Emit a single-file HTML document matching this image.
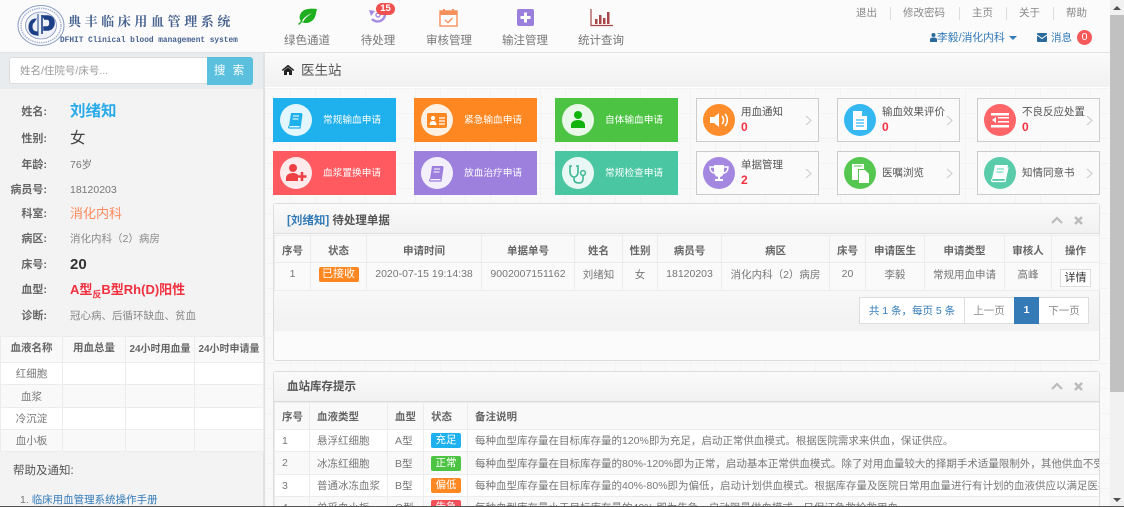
<!DOCTYPE html>
<html lang="zh-CN"><head><meta charset="utf-8"><title>典丰临床用血管理系统</title>
<style>
*{box-sizing:border-box}
html,body{margin:0;padding:0;width:1124px;height:507px;overflow:hidden;background:#f8f8f8}
body{position:relative;font-family:"Liberation Sans","Noto Sans CJK SC",sans-serif;font-size:10.5px;color:#777;filter:blur(.3px)}
.a{position:absolute}
.t{position:absolute;white-space:nowrap;line-height:14px}
.c{transform:translateX(-50%)}
.lb{position:absolute;width:47px;left:0;text-align:right;white-space:nowrap;line-height:14px;font-size:11px;font-weight:bold;color:#666}
.v{position:absolute;left:70px;white-space:nowrap;line-height:18px}
.tile{position:absolute;width:123px;height:44px;color:#fff}
.tile .k{position:absolute;left:7px;top:6px;width:32px;height:32px;border-radius:50%;background:rgba(255,255,255,.88)}
.tile .k svg,.out .k svg{position:absolute;left:0;top:0;width:32px;height:32px}
.tile span{position:absolute;left:50px;top:16px;font-size:9.7px;line-height:14px;white-space:nowrap}
.out{position:absolute;width:123px;height:44px;background:#fafafa;border:1px solid #ccc;color:#555}
.out .k{position:absolute;left:6px;top:5px;width:32px;height:32px;border-radius:50%}
.out b{position:absolute;left:44px;top:21px;color:#f5303f;font-size:12px;line-height:14px}
.out span{position:absolute;left:44px;top:6px;font-size:10.5px;line-height:14px;white-space:nowrap}
.out span.m{top:14px}
.out svg.ch{position:absolute;right:6px;top:16px;width:7px;height:11px}
table{position:absolute;border-collapse:collapse;table-layout:fixed;background:#fff}
td,th{border:1px solid #ececec;padding:0;text-align:center;font-size:10.5px;white-space:nowrap;overflow:hidden;font-weight:normal}
th{font-weight:bold;color:#666;background:#f9f9f9}
.panel{position:absolute;left:273px;width:827px;border:1px solid #ddd;border-radius:3px;background:#fbfbfb}
.ph{position:absolute;left:0;top:0;width:825px;height:30px;background:linear-gradient(#fafafa,#f1f1f1);border-bottom:1px solid #ddd}
.left td,.left th{text-align:left;padding-left:7px}
.lab{display:inline-block;width:30px;height:15px;line-height:15px;text-align:center;color:#fff;border-radius:2px;font-size:10.5px}
.p1 td{padding-bottom:5px}
.p1 th{padding-top:2px}
.lt th{padding-bottom:4px}
</style></head><body>

<!-- page background grid -->
<div class="a" style="left:265px;top:88px;width:845px;height:419px;background-color:#f9f9f9;background-image:linear-gradient(#f3f3f3 1px,transparent 1px),linear-gradient(90deg,#f3f3f3 1px,transparent 1px);background-size:25px 25px"></div>

<!-- header -->
<div class="a" style="left:0;top:0;width:1110px;height:53px;background:#fbfbfb;border-bottom:1px solid #e3e3e3"></div>
<svg class="a" style="left:17px;top:5px" width="48" height="41" viewBox="0 0 48 41">
<ellipse cx="24" cy="20.5" rx="23" ry="20" fill="#fff" stroke="#8b9cc0" stroke-width="1"/>
<ellipse cx="24" cy="20.5" rx="20" ry="17.2" fill="none" stroke="#a9b6d2" stroke-width="1.6" stroke-dasharray="1.5 .8"/>
<ellipse cx="24" cy="20.5" rx="15.5" ry="13.5" fill="#eef1f7" stroke="#7f92b9" stroke-width=".8"/>
<path d="M21 9v22M12 22c0-6 4-8 7-8l-2 3c-2 1-2 3-2 5 0 3 2 5 6 5v3c-6 0-9-3-9-8z" fill="#1c3f86" stroke="#1c3f86"/>
<path d="M25 10v19M25 11h5c5 0 7 3 7 7s-3 7-7 7h-3v-3h3c2 0 3-2 3-4s-1-4-3-4h-3" fill="#1c3f86" stroke="#1c3f86" stroke-width="1.6"/>
</svg>
<div class="t" style="left:68px;top:14px;font-family:'Noto Serif CJK SC','Liberation Serif',serif;font-weight:bold;font-size:13px;letter-spacing:3.6px;color:#46618f">典丰临床用血管理系统</div>
<div class="t" style="left:60px;top:34px;font-family:'Liberation Mono',monospace;font-weight:bold;font-size:7.8px;color:#46618f">DFHIT Clinical blood management system</div>

<!-- nav -->
<svg class="a" style="left:297px;top:8px" width="21" height="18" viewBox="0 0 21 18"><path d="M20 1C12 0 5 1 3 7c-1 3 0 5 1 6l-3 3 1 1 3-3c3 2 8 1 11-2 3-3 3-8 4-11zM5 13c2-4 6-6 10-8-4 3-7 5-9 9z" fill="#1fae1f"/></svg>
<svg class="a" style="left:369px;top:8px" width="20" height="19" viewBox="0 0 20 19"><path d="M0 2l6 1-4 5z" fill="#a48ae0"/><path d="M3 11a7.500 7.500 0 0 0 13-6" fill="none" stroke="#a48ae0" stroke-width="2.400"/><circle cx="9" cy="7" r="2" fill="none" stroke="#a48ae0" stroke-width="1.400"/></svg>
<div class="a" style="left:376px;top:3px;width:19px;height:12px;border-radius:6px;background:#f05050;color:#fff;font-size:9.5px;font-weight:bold;line-height:12px;text-align:center">15</div>
<svg class="a" style="left:439px;top:8px" width="19" height="19" viewBox="0 0 19 19"><rect x="1" y="3" width="17" height="15" fill="#fff" stroke="#f5905a" stroke-width="1.4"/><path d="M1 3h17v4H1z" fill="#f5905a"/><path d="M5 1v4M14 1v4" stroke="#f5905a" stroke-width="2"/><path d="M6 12l3 2.500 4.500-4.500" fill="none" stroke="#f5905a" stroke-width="1.4"/></svg>
<svg class="a" style="left:517px;top:9px" width="17" height="17" viewBox="0 0 17 17"><rect width="17" height="17" rx="2" fill="#9b7fdc"/><path d="M8.500 3.500v10M3.500 8.500h10" stroke="#fff" stroke-width="3"/></svg>
<svg class="a" style="left:590px;top:9px" width="23" height="18" viewBox="0 0 23 18"><path d="M1 0v16.500h22" fill="none" stroke="#a8474a" stroke-width="1.2"/><path d="M5 10h2.500v5H5zM9 6h2.500v9H9zM13 9h2.500v6H13zM17 3h2.500v12H17z" fill="#a8474a"/></svg>
<div class="t c" style="left:307px;top:34px;font-size:11.5px;color:#777">绿色通道</div>
<div class="t c" style="left:378px;top:34px;font-size:11.5px;color:#777">待处理</div>
<div class="t c" style="left:449px;top:34px;font-size:11.5px;color:#777">审核管理</div>
<div class="t c" style="left:525px;top:34px;font-size:11.5px;color:#777">输注管理</div>
<div class="t c" style="left:601px;top:34px;font-size:11.5px;color:#777">统计查询</div>

<!-- top right -->
<div class="t" style="left:856px;top:6px;color:#888">退出</div>
<div class="t" style="left:903px;top:6px;color:#888">修改密码</div>
<div class="t" style="left:972px;top:6px;color:#888">主页</div>
<div class="t" style="left:1019px;top:6px;color:#888">关于</div>
<div class="t" style="left:1066px;top:6px;color:#888">帮助</div>
<div class="a" style="left:890px;top:7px;width:1px;height:13px;background:#ddd"></div>
<div class="a" style="left:959px;top:7px;width:1px;height:13px;background:#ddd"></div>
<div class="a" style="left:1006px;top:7px;width:1px;height:13px;background:#ddd"></div>
<div class="a" style="left:1053px;top:7px;width:1px;height:13px;background:#ddd"></div>
<svg class="a" style="left:930px;top:33px" width="7" height="9" viewBox="0 0 7 9"><circle cx="3.500" cy="2" r="2" fill="#2a6a9c"/><path d="M0 9V6.500C0 5 1.500 4.500 3.500 4.500S7 5 7 6.500V9z" fill="#2a6a9c"/></svg>
<div class="t" style="left:937px;top:31px;font-size:10.8px;color:#337ab7">李毅/消化内科</div>
<div class="a" style="left:1009px;top:36px;border:4px solid transparent;border-top:4px solid #337ab7;border-bottom:0"></div>
<svg class="a" style="left:1037px;top:33px" width="10" height="9" viewBox="0 0 10 9"><rect width="10" height="9" rx="1" fill="#2a6a9c"/><path d="M0 2l5 3.500L10 2" fill="none" stroke="#fff" stroke-width="1"/></svg>
<div class="t" style="left:1051px;top:31px;color:#337ab7">消息</div>
<div class="a" style="left:1077px;top:30px;width:15px;height:15px;border-radius:50%;background:#f55a5a;color:#fff;text-align:center;line-height:15px;font-size:10.5px">0</div>

<!-- sidebar -->
<div class="a" style="left:0;top:53px;width:265px;height:454px;background:#f3f3f3;border-right:2px solid #e2e2e2"></div>
<div class="a" style="left:0;top:53px;width:263px;height:36px;background:#e8ecef"></div>
<div class="a" style="left:9px;top:57px;width:199px;height:27px;background:#fff;border:1px solid #ddd;border-radius:3px 0 0 3px"></div>
<div class="t" style="left:20px;top:64px;font-size:10.5px;color:#999">姓名/住院号/床号...</div>
<div class="a" style="left:207px;top:57px;width:46px;height:28px;background:#5bc0de;border-radius:0 3px 3px 0;color:#fff;font-size:11.5px;line-height:28px;text-align:center;letter-spacing:2px">搜 索</div>

<div class="lb" style="top:105px">姓名:</div><div class="v" style="top:103px;font-size:15.5px;font-weight:bold;color:#29abe9">刘绪知</div>
<div class="lb" style="top:132px">性别:</div><div class="v" style="top:130px;font-size:15.5px;color:#444">女</div>
<div class="lb" style="top:158px">年龄:</div><div class="v" style="top:156px;font-size:10.5px;color:#777">76岁</div>
<div class="lb" style="top:183px">病员号:</div><div class="v" style="top:181px;font-size:10.5px;color:#777">18120203</div>
<div class="lb" style="top:207px">科室:</div><div class="v" style="top:205px;font-size:13px;color:#ff8a5c">消化内科</div>
<div class="lb" style="top:232px">病区:</div><div class="v" style="top:230px;font-size:10.5px;color:#888">消化内科（2）病房</div>
<div class="lb" style="top:258px">床号:</div><div class="v" style="top:256px;font-size:15px;font-weight:bold;color:#333">20</div>
<div class="lb" style="top:283px">血型:</div><div class="v" style="top:281px;font-size:13px;font-weight:bold;color:#f0303f">A型<sub style="font-size:9px;line-height:0">反</sub>B型Rh(D)阳性</div>
<div class="lb" style="top:309px">诊断:</div><div class="v" style="top:307px;font-size:10.5px;color:#888">冠心病、后循环缺血、贫血</div>

<table class="lt" style="left:0;top:336px;width:263px">
<colgroup><col style="width:62px"><col style="width:63px"><col style="width:69px"><col style="width:69px"></colgroup>
<tr style="height:26px"><th>血液名称</th><th>用血总量</th><th style="font-size:10px">24小时用血量</th><th style="font-size:10px">24小时申请量</th></tr>
<tr style="height:22px"><td>红细胞</td><td></td><td></td><td></td></tr>
<tr style="height:23px;background:#f9f9f9"><td>血浆</td><td></td><td></td><td></td></tr>
<tr style="height:22px"><td>冷沉淀</td><td></td><td></td><td></td></tr>
<tr style="height:22px;background:#f9f9f9"><td>血小板</td><td></td><td></td><td></td></tr>
</table>
<div class="t" style="left:13px;top:464px;font-size:11.5px;color:#555">帮助及通知:</div>
<div class="t" style="left:20px;top:493px;font-size:10.5px;color:#777">1. <span style="color:#337ab7">临床用血管理系统操作手册</span></div>

<!-- breadcrumb -->
<div class="a" style="left:265px;top:53px;width:845px;height:35px;background:linear-gradient(#fafafa,#f1f1f1);border-bottom:1px solid #fff"></div>
<svg class="a" style="left:282px;top:65px" width="12" height="10" viewBox="0 0 12 10"><path d="M6 0L0 5l.7.800L6 1.500l5.300 4.300.7-.800z" fill="#222" stroke="#222" stroke-width=".5"/><path d="M2 5.500L6 2.300l4 3.200V10H7V7H5v3H2z" fill="#222"/></svg>
<div class="t" style="left:301px;top:64px;font-size:13.5px;color:#555">医生站</div>

<!-- coloured tiles -->
<div class="tile" style="left:273px;top:98px;background:#1fb1ee"><div class="k"><svg viewBox="0 0 32 32"><path d="M11 9h11l-2 13H9z" fill="#1fb1ee"/><path d="M9 22c-1 2 0 2 1 2h10l2-14" fill="none" stroke="#1fb1ee" stroke-width="1.200"/><path d="M13 12h6M12.500 15h6" stroke="#fff"/></svg></div><span>常规输血申请</span></div>
<div class="tile" style="left:414px;top:98px;background:#ff8721"><div class="k"><svg viewBox="0 0 32 32"><rect x="6" y="9" width="20" height="15" rx="2" fill="#ff8721"/><circle cx="12" cy="14" r="2" fill="#fff"/><path d="M8.500 21c0-3 1.500-4 3.500-4s3.500 1 3.500 4z" fill="#fff"/><path d="M18 14h6M18 17h6M18 20h6" stroke="#fff" stroke-width="1.200"/></svg></div><span>紧急输血申请</span></div>
<div class="tile" style="left:555px;top:98px;background:#4cc343"><div class="k"><svg viewBox="0 0 32 32"><circle cx="16" cy="11" r="4" fill="#11b30f"/><path d="M9 24v-3c0-3 3-5 7-5s7 2 7 5v3z" fill="#11b30f"/></svg></div><span>自体输血申请</span></div>
<div class="tile" style="left:273px;top:151px;background:#ff5a5f"><div class="k"><svg viewBox="0 0 32 32"><circle cx="13" cy="11" r="4" fill="#ee3f44"/><path d="M6 24v-3c0-3 3-5 7-5 2 0 4 .500 5 2v6z" fill="#ee3f44"/><path d="M22 15v9M17.500 19.500h9" stroke="#ee3f44" stroke-width="2.600"/></svg></div><span>血浆置换申请</span></div>
<div class="tile" style="left:414px;top:151px;background:#9d7fdd"><div class="k"><svg viewBox="0 0 32 32"><path d="M11 9h11l-2 13H9z" fill="#9d7fdd"/><path d="M9 22c-1 2 0 2 1 2h10l2-14" fill="none" stroke="#9d7fdd" stroke-width="1.200"/><path d="M13 12h6M12.500 15h6" stroke="#fff"/></svg></div><span>放血治疗申请</span></div>
<div class="tile" style="left:555px;top:151px;background:#4bc6a2"><div class="k"><svg viewBox="0 0 32 32"><path d="M10 9H8v6c0 3 2 5 4 5s4-2 4-5V9h-2M12 20v2c0 3 2 4 5 4s4-2 4-4v-3" fill="none" stroke="#3fb893" stroke-width="1.600"/><circle cx="21" cy="16" r="2.400" fill="none" stroke="#3fb893" stroke-width="1.500"/></svg></div><span>常规检查申请</span></div>

<!-- outline tiles -->
<div class="out" style="left:696px;top:98px"><div class="k" style="background:#ff8d2b"><svg viewBox="0 0 32 32"><path d="M7 13h4l5-4v14l-5-4H7z" fill="#fff"/><path d="M19 12c2 2 2 6 0 8M22 10c3 3 3 9 0 12" fill="none" stroke="#fff" stroke-width="1.500"/></svg></div><span>用血通知</span><b>0</b><svg class="ch" viewBox="0 0 7 11"><path d="M1 1l5 4.500L1 10" fill="none" stroke="#ccc" stroke-width="1.100"/></svg></div>
<div class="out" style="left:837px;top:98px"><div class="k" style="background:#35b7f2"><svg viewBox="0 0 32 32"><path d="M9 7h9l5 5v14H9z" fill="#fff"/><path d="M18 7v5h5" fill="#35b7f2"/><path d="M12 16h8M12 19h8M12 22h8" stroke="#35b7f2" stroke-width="1.200"/></svg></div><span>输血效果评价</span><b>0</b><svg class="ch" viewBox="0 0 7 11"><path d="M1 1l5 4.500L1 10" fill="none" stroke="#ccc" stroke-width="1.100"/></svg></div>
<div class="out" style="left:977px;top:98px"><div class="k" style="background:#ff6468"><svg viewBox="0 0 32 32"><path d="M7 9h18v2.500H7zM7 21h18v2.500H7zM14 13h11v1.500H14zM14 17h11v1.500H14z" fill="#fff"/><path d="M12 13v6l-4-3z" fill="#fff"/></svg></div><span>不良反应处置</span><b>0</b><svg class="ch" viewBox="0 0 7 11"><path d="M1 1l5 4.500L1 10" fill="none" stroke="#ccc" stroke-width="1.100"/></svg></div>
<div class="out" style="left:696px;top:151px"><div class="k" style="background:#a487e0"><svg viewBox="0 0 32 32"><path d="M11 8h10v6c0 4-2 6-5 6s-5-2-5-6z" fill="#fff"/><path d="M11 10H7c0 4 2 6 5 6M21 10h4c0 4-2 6-5 6" fill="none" stroke="#fff" stroke-width="1.400"/><path d="M15 19h2v3h3v2h-8v-2h3z" fill="#fff"/></svg></div><span>单据管理</span><b>2</b><svg class="ch" viewBox="0 0 7 11"><path d="M1 1l5 4.500L1 10" fill="none" stroke="#ccc" stroke-width="1.100"/></svg></div>
<div class="out" style="left:837px;top:151px"><div class="k" style="background:#55c750"><svg viewBox="0 0 32 32"><path d="M8 7h12v5h-6v11H8z" fill="#fff"/><path d="M15 13h6l4 4v9H15z" fill="#fff"/><path d="M10 9h8" stroke="#55c750"/></svg></div><span class="m">医嘱浏览</span><svg class="ch" viewBox="0 0 7 11"><path d="M1 1l5 4.500L1 10" fill="none" stroke="#ccc" stroke-width="1.100"/></svg></div>
<div class="out" style="left:977px;top:151px"><div class="k" style="background:#5accaa"><svg viewBox="0 0 32 32"><path d="M11 8h13l-3 14H8z" fill="#fff"/><path d="M8 22c-1 2 0 2.500 1 2.500h12l3-14" fill="none" stroke="#fff" stroke-width="1.200"/><path d="M13 12h7M12.500 15h7" stroke="#5accaa"/></svg></div><span class="m">知情同意书</span><svg class="ch" viewBox="0 0 7 11"><path d="M1 1l5 4.500L1 10" fill="none" stroke="#ccc" stroke-width="1.100"/></svg></div>

<!-- panel 1 -->
<div class="panel" style="top:203px;height:158px">
<div class="ph"></div>
<div class="a" style="left:0;top:87px;width:825px;height:40px;background:linear-gradient(#f8f8f8,#f1f1f1)"></div>
</div>
<div class="t" style="left:287px;top:214px;font-size:11.5px;font-weight:bold;color:#555"><span style="color:#337ab7">[刘绪知]</span> 待处理单据</div>
<svg class="a" style="left:1051px;top:216px" width="12" height="8" viewBox="0 0 12 8"><path d="M1 7l5-5 5 5" fill="none" stroke="#bbb" stroke-width="2.200"/></svg>
<svg class="a" style="left:1074px;top:216px" width="9" height="9" viewBox="0 0 9 9"><path d="M1 1l7 7M8 1L1 8" stroke="#bbb" stroke-width="2.400"/></svg>
<table class="p1" style="left:274px;top:235px;width:825px;background:#fafafa">
<colgroup><col style="width:36px"><col style="width:56px"><col style="width:115px"><col style="width:93px"><col style="width:48px"><col style="width:35px"><col style="width:64px"><col style="width:108px"><col style="width:36px"><col style="width:59px"><col style="width:80px"><col style="width:47px"><col style="width:48px"></colgroup>
<tr style="height:27px"><th>序号</th><th>状态</th><th>申请时间</th><th>单据单号</th><th>姓名</th><th>性别</th><th>病员号</th><th>病区</th><th>床号</th><th>申请医生</th><th>申请类型</th><th>审核人</th><th>操作</th></tr>
<tr style="height:28px;background:#fafafa"><td>1</td><td><span class="lab" style="width:40px;background:#ff8721;font-size:11px">已接收</span></td><td>2020-07-15 19:14:38</td><td>9002007151162</td><td>刘绪知</td><td>女</td><td>18120203</td><td>消化内科（2）病房</td><td>20</td><td>李毅</td><td>常规用血申请</td><td>高峰</td><td style="overflow:visible"><span style="display:inline-block;position:relative;top:4px;width:31px;height:18px;line-height:17px;background:#fff;border:1px solid #ddd;color:#333;font-size:11px">详情</span></td></tr>
</table>
<!-- pager -->
<div class="a" style="left:859px;top:297px;width:230px;height:27px;background:#fff;border:1px solid #ddd"></div>
<div class="a" style="left:964px;top:297px;width:1px;height:27px;background:#ddd"></div>
<div class="a" style="left:1014px;top:297px;width:25px;height:27px;background:#337ab7;color:#fff;text-align:center;line-height:27px;font-weight:bold;font-size:10.5px">1</div>
<div class="t c" style="left:912px;top:304px;color:#337ab7">共 1 条，每页 5 条</div>
<div class="t c" style="left:989px;top:304px;color:#888">上一页</div>
<div class="t c" style="left:1064px;top:304px;color:#888">下一页</div>

<!-- panel 2 -->
<div class="panel" style="top:371px;height:140px">
<div class="ph"></div>
</div>
<div class="t" style="left:287px;top:380px;font-size:11.5px;font-weight:bold;color:#555">血站库存提示</div>
<svg class="a" style="left:1051px;top:382px" width="12" height="8" viewBox="0 0 12 8"><path d="M1 7l5-5 5 5" fill="none" stroke="#bbb" stroke-width="2.200"/></svg>
<svg class="a" style="left:1074px;top:382px" width="9" height="9" viewBox="0 0 9 9"><path d="M1 1l7 7M8 1L1 8" stroke="#bbb" stroke-width="2.400"/></svg>
<div class="a left" style="left:274px;top:402px;width:825px;height:105px;overflow:hidden">
<table class="left" style="left:0;top:0;width:825px">
<colgroup><col style="width:35px"><col style="width:78px"><col style="width:36px"><col style="width:44px"><col style="width:632px"></colgroup>
<tr style="height:27px"><th>序号</th><th>血液类型</th><th>血型</th><th>状态</th><th>备注说明</th></tr>
<tr style="height:22px"><td>1</td><td>悬浮红细胞</td><td>A型</td><td><span class="lab" style="background:#1fb1ee">充足</span></td><td>每种血型库存量在目标库存量的120%即为充足，启动正常供血模式。根据医院需求来供血，保证供应。</td></tr>
<tr style="height:23px;background:#f9f9f9"><td>2</td><td>冰冻红细胞</td><td>B型</td><td><span class="lab" style="background:#4cc343">正常</span></td><td>每种血型库存量在目标库存量的80%-120%即为正常，启动基本正常供血模式。除了对用血量较大的择期手术适量限制外，其他供血不受影响。</td></tr>
<tr style="height:22px"><td>3</td><td>普通冰冻血浆</td><td>B型</td><td><span class="lab" style="background:#ff8721">偏低</span></td><td>每种血型库存量在目标库存量的40%-80%即为偏低，启动计划供血模式。根据库存量及医院日常用血量进行有计划的血液供应以满足医疗需求。</td></tr>
<tr style="height:22px;background:#f9f9f9"><td>4</td><td>单采血小板</td><td>O型</td><td><span class="lab" style="background:#f5505a">告急</span></td><td>每种血型库存量小于目标库存量的40%,即为告急，启动限量供血模式。只保证急救抢救用血。</td></tr>
</table>
</div>

<!-- scrollbar -->
<div class="a" style="left:1110px;top:0;width:14px;height:507px;background:#f1f1f1"></div>
<div class="a" style="left:1110px;top:15px;width:14px;height:377px;background:#c1c1c1"></div>
<div class="a" style="left:1113px;top:6px;border:4px solid transparent;border-bottom:4px solid #505050;border-top:0"></div>
<div class="a" style="left:1113px;top:498px;border:4px solid transparent;border-top:4px solid #505050;border-bottom:0"></div>

<div class="a" style="left:0;top:506px;width:1124px;height:1px;background:#555"></div>
</body></html>
